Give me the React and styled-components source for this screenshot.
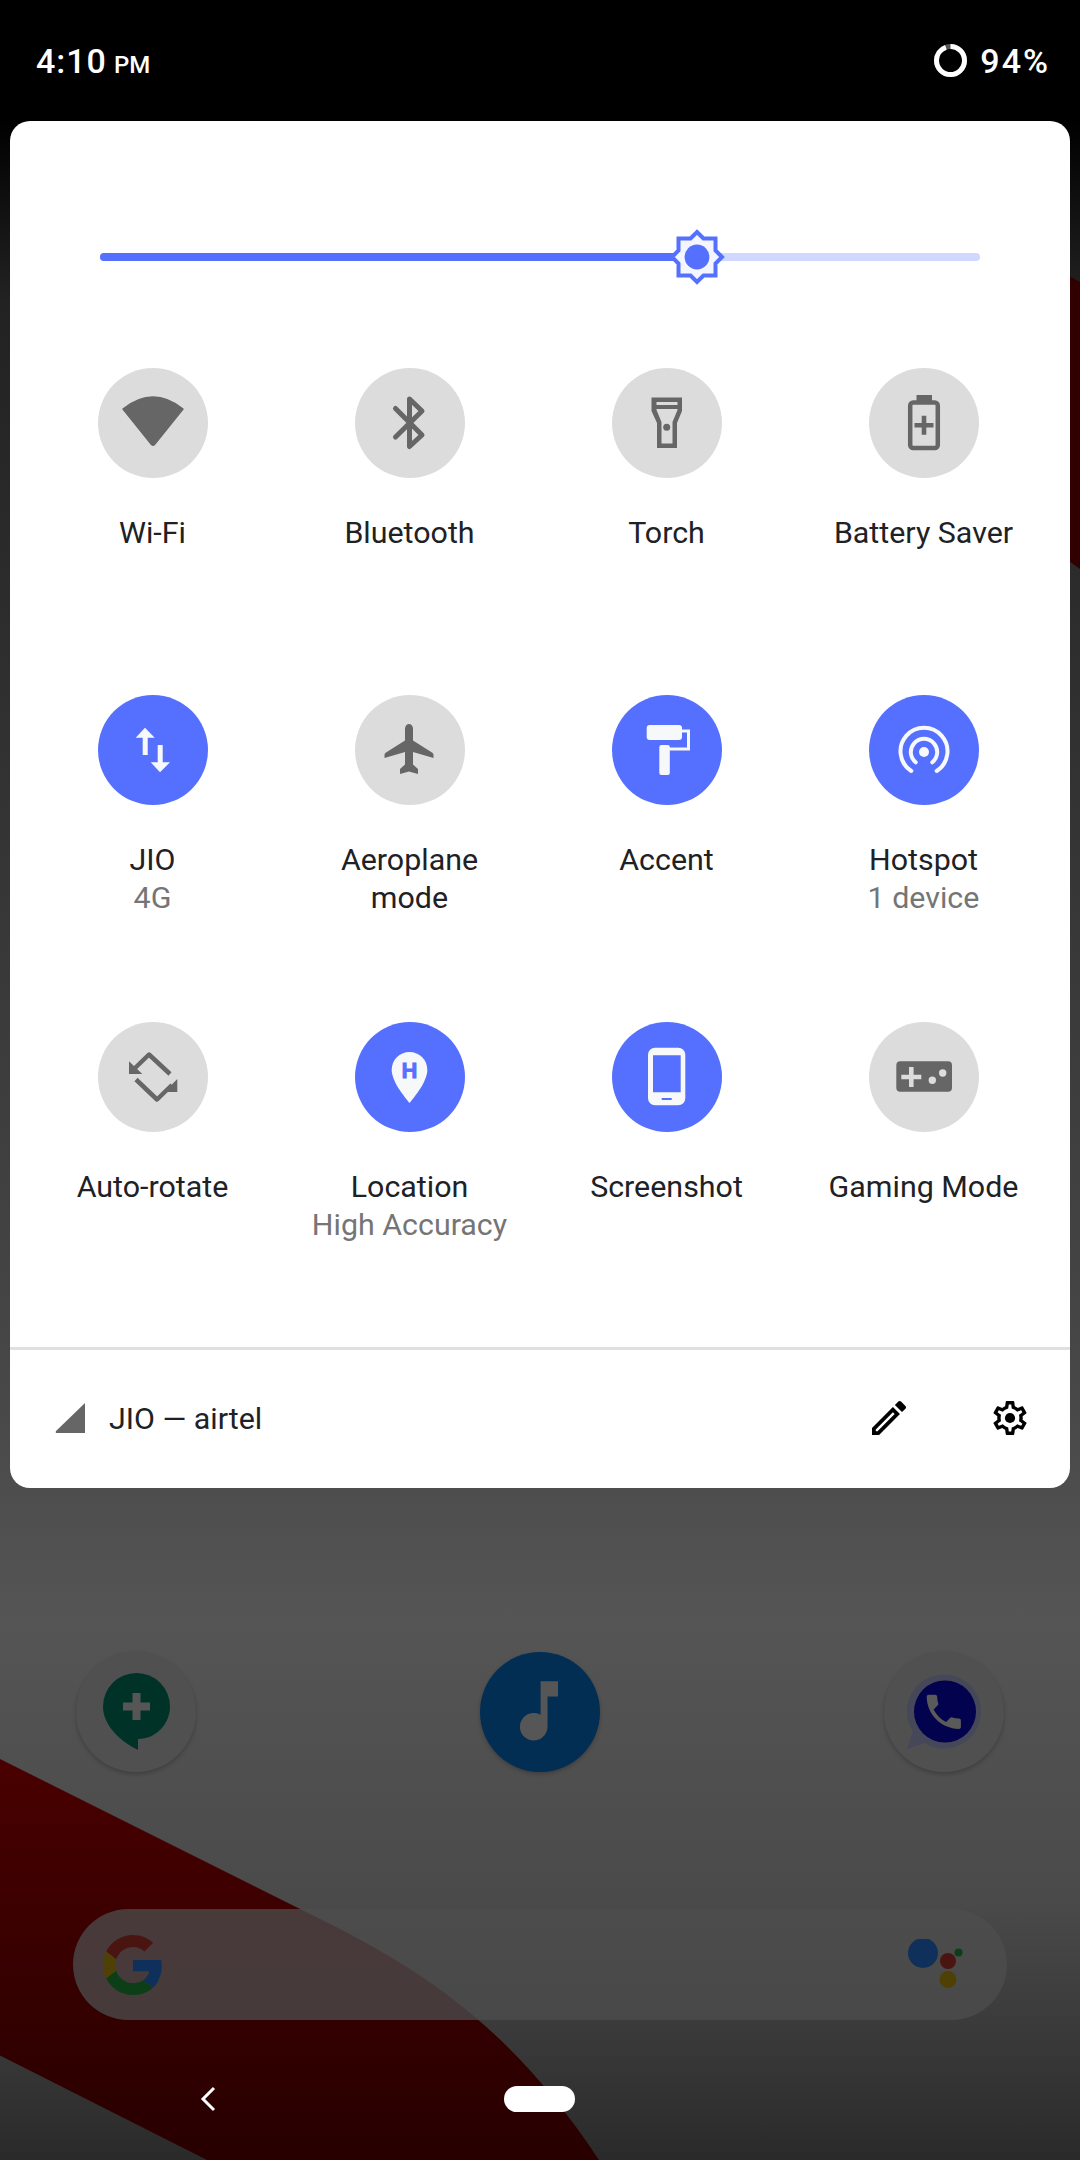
import React from 'react';
import styled, { createGlobalStyle } from 'styled-components';

const GlobalStyle = createGlobalStyle`
  html, body {
    margin: 0;
    padding: 0;
    background: #000;
  }
  body {
    font-family: Roboto, "Liberation Sans", sans-serif;
  }
`;

const Screen = styled.div`
  position: relative;
  width: 1080px;
  height: 2160px;
  overflow: hidden;
  background: linear-gradient(
    180deg,
    #000 0,
    #000 120px,
    #222 300px,
    #484848 1400px,
    #555 1620px,
    #4a4a4a 1900px,
    #2a2a2a 2160px
  );
`;

const Wallpaper = styled.svg`
  position: absolute;
  inset: 0;
`;

const Content = styled.div`
  position: relative;
  display: flex;
  flex-direction: column;
  height: 100%;
`;

/* status bar */
const StatusBar = styled.div`
  height: 121px;
  flex-shrink: 0;
  display: flex;
  align-items: center;
  justify-content: space-between;
  padding: 0 30px 0 36px;
  color: #fff;
  font-weight: 500;
`;

const Clock = styled.div`
  font-size: 34px;
  letter-spacing: 1px;
  display: flex;
  align-items: baseline;
  gap: 7px;
`;

const ClockSuffix = styled.span`
  font-size: 24px;
  letter-spacing: 0;
`;

const BatteryInfo = styled.div`
  display: flex;
  align-items: center;
  gap: 13px;
  font-size: 34px;
  letter-spacing: 2px;
`;

/* quick settings panel */
const Panel = styled.section`
  margin: 0 10px;
  height: 1367px;
  flex-shrink: 0;
  background: #fff;
  border-radius: 20px;
  display: flex;
  flex-direction: column;
`;

const SliderRow = styled.div`
  padding: 132px 90px 107px;
`;

const Track = styled.div`
  position: relative;
  height: 8px;
  border-radius: 4px;
  background: #d0d8ff;
`;

const TrackFill = styled.div`
  width: ${(p) => p.$value}%;
  height: 100%;
  border-radius: 4px;
  background: #5570ff;
`;

const Thumb = styled.svg`
  position: absolute;
  left: ${(p) => p.$value}%;
  top: 50%;
  width: 60px;
  height: 60px;
  transform: translate(-50%, -50%);
`;

const TileGrid = styled.div`
  flex: 1;
  display: grid;
  grid-template-columns: repeat(4, 257px);
  grid-template-rows: 327px 327px 1fr;
  padding-left: 14px;
`;

const Tile = styled.div`
  display: flex;
  flex-direction: column;
  align-items: center;
  text-align: center;
`;

const TileCircle = styled.div`
  width: 110px;
  height: 110px;
  border-radius: 50%;
  background: ${(p) => (p.$active ? '#5570ff' : '#dcdcdc')};
  color: ${(p) => (p.$active ? '#f7f8fa' : '#666666')};
  margin-bottom: 36px;
  display: flex;
`;

const TileLabel = styled.div`
  font-size: 30.4px;
  line-height: 37.5px;
  color: #202124;
  white-space: pre-line;
`;

const TileSub = styled.div`
  font-size: 30.4px;
  line-height: 37.5px;
  color: #757575;
`;

const PanelFooter = styled.div`
  box-sizing: border-box;
  height: 141px;
  flex-shrink: 0;
  border-top: 3px solid #e0e0e0;
  display: flex;
  align-items: center;
  padding: 0 43px 2px 45px;
`;

const Carrier = styled.div`
  flex: 1;
  margin-left: 24px;
  font-size: 30.4px;
  color: #202124;
`;

const FooterIcon = styled.svg`
  width: 34px;
  height: 34px;
  margin-left: ${(p) => p.$gap}px;
  color: #000;
`;

/* launcher behind the panel */
const Hotseat = styled.div`
  margin-top: 164px;
  padding: 0 76px;
  display: flex;
  justify-content: space-between;
`;

const AppCircle = styled.div`
  width: 120px;
  height: 120px;
  border-radius: 50%;
  background: ${(p) => p.$color || '#505050'};
  box-shadow: 0 2px 4px rgba(0, 0, 0, 0.22);
  display: flex;
`;

const SearchBar = styled.div`
  margin: 137px 73px 0;
  height: 111px;
  border-radius: 56px;
  background: rgba(77, 77, 77, 0.75);
  display: flex;
  align-items: center;
  justify-content: space-between;
  padding: 0 43px 0 30px;
`;

const NavBar = styled.div`
  margin-top: 66px;
  height: 26px;
  display: flex;
  align-items: center;
  padding-left: 200px;
  gap: 288px;
`;

const HomePill = styled.div`
  width: 71px;
  height: 26px;
  border-radius: 13px;
  background: #fff;
`;

const BackChevron = styled.svg`
  width: 16px;
  height: 26px;
`;

const Glyph = ({ children }) => (
  <svg viewBox="0 0 110 110" width="110" height="110" fill="currentColor">
    {children}
  </svg>
);

const icons = {
  wifi: (
    <path d="M25 41 Q55 17 85 41 L56.5 76.5 Q55 78 53.5 76.5 Z" stroke="currentColor" strokeWidth="1.5" strokeLinejoin="round" />
  ),
  bluetooth: (
    <path d="M40.5 40.5 L67 67 L54.5 78.5 V31 L67 43 L40.5 69" fill="none" stroke="currentColor" strokeWidth="5" strokeLinejoin="round" strokeLinecap="round" />
  ),
  torch: (
    <>
      <path
        fillRule="evenodd"
        d="M39.5 29.5H70V43L65 55V80H45V55L39.5 43Z M44.5 34V37H65.5V34Z M44.5 41V42L49.5 54V75.5H60.5V54L65.5 42V41Z"
      />
      <circle cx="54.7" cy="59.3" r="3.5" />
    </>
  ),
  battery: (
    <>
      <path d="M47.5 27H63V35H47.5Z" />
      <rect x="41.2" y="34.5" width="27.6" height="45.6" rx="3" fill="none" stroke="currentColor" strokeWidth="4.5" />
      <path d="M52.7 47.8H57.3V55H64.5V59.6H57.3V66.8H52.7V59.6H45.5V55H52.7Z" />
    </>
  ),
  data: (
    <path d="M47 32.7L56.7 42.7H49.7V60H44.7V42.7H37.7Z M59.7 50H64.7V67.3H72L62 77.3L52.7 67.3H59.7Z" />
  ),
  plane: (
    <path d="M50 33.5C50 31 52 29 54 29C56 29 58 31 58 33.5V45.5L77 57.5C78 58.2 78.5 59 78.5 60V63L58 57V69.5L63 74V79L54 76.5L45 79V74L50 69.5V57L29.5 63V60C29.5 59 30 58.2 31 57.5L50 45.5Z" />
  ),
  roller: (
    <>
      <rect x="34.7" y="30" width="35.3" height="15" rx="3" />
      <path d="M70 36H76.5V54H52" fill="none" stroke="currentColor" strokeWidth="3" />
      <rect x="47.3" y="50" width="10.5" height="30" rx="2" />
    </>
  ),
  hotspot: (
    <>
      <circle cx="55" cy="57" r="5" />
      <path
        d="M42.3 76A23.5 23.5 0 1 1 67.7 76 M46.7 67.3A13.2 13.2 0 1 1 63.3 67.3"
        fill="none"
        stroke="currentColor"
        strokeWidth="4"
        strokeLinecap="round"
      />
    </>
  ),
  rotate: (
    <>
      <path d="M72 52L51 32.5L36 47 M38 57.5L59 77.5L74 63" fill="none" stroke="currentColor" strokeWidth="4.5" strokeLinejoin="round" />
      <path d="M31 39.3V52H44.3Z M79.3 57V70H66.5Z" />
    </>
  ),
  location: (
    <>
      <path d="M54.5 30C44.5 30 36.7 38 36.7 47.7C36.7 59 48 73 54.5 81C61 73 72.3 59 72.3 47.7C72.3 38 64.5 30 54.5 30Z" />
      <text x="54.5" y="56" textAnchor="middle" fontFamily="Liberation Sans" fontWeight="700" fontSize="22" fill="#5570ff" stroke="#5570ff" strokeWidth="0.8">
        H
      </text>
    </>
  ),
  phone: (
    <path
      fillRule="evenodd"
      d="M43 25.7H66.3A7 7 0 0 1 73.3 32.7V76.3A7 7 0 0 1 66.3 83.3H43A7 7 0 0 1 36 76.3V32.7A7 7 0 0 1 43 25.7Z M41 33.3V70.3H68.7V33.3Z M49.7 76V78H59.7V76Z"
    />
  ),
  gamepad: (
    <path
      fillRule="evenodd"
      d="M31.3 39.3H79A4 4 0 0 1 83 43.3V65.7A4 4 0 0 1 79 69.7H31.3A4 4 0 0 1 27.3 65.7V43.3A4 4 0 0 1 31.3 39.3Z M40 45V52.7H32.3V57.3H40V65H44.6V57.3H52.3V52.7H44.6V45Z M63.3 54.6A3.7 3.7 0 1 0 63.3 62A3.7 3.7 0 1 0 63.3 54.6Z M73.7 47.3A3.7 3.7 0 1 0 73.7 54.7A3.7 3.7 0 1 0 73.7 47.3Z"
    />
  ),
};

const tiles = [
  { icon: 'wifi', label: 'Wi-Fi' },
  { icon: 'bluetooth', label: 'Bluetooth' },
  { icon: 'torch', label: 'Torch' },
  { icon: 'battery', label: 'Battery Saver' },
  { icon: 'data', label: 'JIO', sub: '4G', active: true },
  { icon: 'plane', label: 'Aeroplane\nmode' },
  { icon: 'roller', label: 'Accent', active: true },
  { icon: 'hotspot', label: 'Hotspot', sub: '1 device', active: true },
  { icon: 'rotate', label: 'Auto-rotate' },
  { icon: 'location', label: 'Location', sub: 'High Accuracy', active: true },
  { icon: 'phone', label: 'Screenshot', active: true },
  { icon: 'gamepad', label: 'Gaming Mode' },
];

const BRIGHTNESS = 67.8;

export default function App() {
  return (
    <Screen>
      <GlobalStyle />
      <Wallpaper viewBox="0 0 1080 2160" width="1080" height="2160">
        <defs>
          <linearGradient id="wave" x1="0" y1="1750" x2="0" y2="2160" gradientUnits="userSpaceOnUse">
            <stop offset="0" stopColor="#4a0000" />
            <stop offset="1" stopColor="#280000" />
          </linearGradient>
        </defs>
        <path d="M0 1759L296 1907C400 1958 500 2010 599 2160H207L0 2055.6Z" fill="url(#wave)" />
        <path d="M1040 260L1080 282V569L1040 540Z" fill="#300000" />
      </Wallpaper>
      <Content>
        <StatusBar>
          <Clock>
            4:10<ClockSuffix>PM</ClockSuffix>
          </Clock>
          <BatteryInfo>
            <svg width="33" height="33" viewBox="0 0 33 33">
              <circle cx="16.5" cy="16.5" r="14" fill="none" stroke="#555" strokeWidth="5" />
              <circle
                cx="16.5"
                cy="16.5"
                r="14"
                fill="none"
                stroke="#fff"
                strokeWidth="5"
                strokeDasharray="82.7 88"
                transform="rotate(-90 16.5 16.5)"
              />
            </svg>
            94%
          </BatteryInfo>
        </StatusBar>

        <Panel>
          <SliderRow>
            <Track>
              <TrackFill $value={BRIGHTNESS} />
              <Thumb $value={BRIGHTNESS} viewBox="0 0 60 60">
                <polygon
                  points="30,5 36.5,11.5 48.5,11.5 48.5,23.5 55,30 48.5,36.5 48.5,48.5 36.5,48.5 30,55 23.5,48.5 11.5,48.5 11.5,36.5 5,30 11.5,23.5 11.5,11.5 23.5,11.5"
                  fill="#f4f6ff"
                  stroke="#5570ff"
                  strokeWidth="4"
                />
                <circle cx="30" cy="30" r="12.4" fill="#5570ff" />
              </Thumb>
            </Track>
          </SliderRow>

          <TileGrid>
            {tiles.map((t) => (
              <Tile key={t.icon}>
                <TileCircle $active={t.active}>
                  <Glyph>{icons[t.icon]}</Glyph>
                </TileCircle>
                <TileLabel>{t.label}</TileLabel>
                {t.sub && <TileSub>{t.sub}</TileSub>}
              </Tile>
            ))}
          </TileGrid>

          <PanelFooter>
            <svg width="30" height="30" viewBox="0 0 30 30">
              <path d="M30 0V30H2Q0 30 1 28Z" fill="#666" />
            </svg>
            <Carrier>JIO — airtel</Carrier>
            <FooterIcon viewBox="3 3 18 18" fill="currentColor">
              <path d="M3 17.25V21h3.75L17.81 9.94l-3.75-3.75L3 17.25zM5.92 19H5v-.92l9.06-9.06.92.92L5.92 19zM20.71 5.63l-2.34-2.34c-.2-.2-.45-.29-.71-.29s-.51.1-.7.29l-1.83 1.83 3.75 3.75 1.83-1.83c.39-.39.39-1.02 0-1.41z" />
            </FooterIcon>
            <FooterIcon $gap={87} viewBox="2 2 20 20" fill="currentColor">
              <path d="M19.43 12.98c.04-.32.07-.64.07-.98 0-.34-.03-.66-.07-.98l2.11-1.65c.19-.15.24-.42.12-.64l-2-3.46c-.09-.16-.26-.25-.44-.25-.06 0-.12.01-.17.03l-2.49 1c-.52-.4-1.08-.73-1.69-.98l-.38-2.65C14.46 2.18 14.25 2 14 2h-4c-.25 0-.46.18-.49.42l-.38 2.65c-.61.25-1.17.59-1.69.98l-2.49-1c-.06-.02-.12-.03-.18-.03-.17 0-.34.09-.43.25l-2 3.46c-.13.22-.07.49.12.64l2.11 1.65c-.04.32-.07.65-.07.98 0 .33.03.66.07.98l-2.11 1.65c-.19.15-.24.42-.12.64l2 3.46c.09.16.26.25.44.25.06 0 .12-.01.17-.03l2.49-1c.52.4 1.08.73 1.69.98l.38 2.65c.03.24.24.42.49.42h4c.25 0 .46-.18.49-.42l.38-2.65c.61-.25 1.17-.59 1.69-.98l2.49 1c.06.02.12.03.18.03.17 0 .34-.09.43-.25l2-3.46c.12-.22.07-.49-.12-.64l-2.11-1.65zm-1.98-1.71c.04.31.05.52.05.73 0 .21-.02.43-.05.73l-.14 1.13.89.7 1.08.84-.7 1.21-1.27-.51-1.04-.42-.9.68c-.43.32-.84.56-1.25.73l-1.06.43-.16 1.13-.2 1.35h-1.4l-.19-1.35-.16-1.13-1.06-.43c-.43-.18-.83-.41-1.23-.71l-.91-.7-1.06.43-1.27.51-.7-1.21 1.08-.84.89-.7-.14-1.13c-.03-.31-.05-.54-.05-.74s.02-.43.05-.73l.14-1.13-.89-.7-1.08-.84.7-1.21 1.27.51 1.04.42.9-.68c.43-.32.84-.56 1.25-.73l1.06-.43.16-1.13.2-1.35h1.39l.19 1.35.16 1.13 1.06.43c.43.18.83.41 1.23.71l.91.7 1.06-.43 1.27-.51.7 1.21-1.07.85-.89.7.14 1.13z" />
              <circle cx="12" cy="12" r="3" />
            </FooterIcon>
          </PanelFooter>
        </Panel>

        <Hotseat>
          <AppCircle>
            <svg width="120" height="120" viewBox="0 0 120 120">
              <path d="M60.5 21A33.5 33.5 0 0 1 94 54.5C94 72 80 87 62 87V98C42 88 27 72 27 54.5A33.5 33.5 0 0 1 60.5 21Z" fill="#003228" />
              <path d="M56.5 41H64.5V50.5H74V58.5H64.5V68H56.5V58.5H47V50.5H56.5Z" fill="#565656" />
            </svg>
          </AppCircle>
          <AppCircle $color="#032e54">
            <svg width="120" height="120" viewBox="0 0 120 120">
              <path d="M60.6 29.3H78V44.5H67.5V74.7A13.8 13.8 0 1 1 60.6 62.8Z" fill="#565656" />
            </svg>
          </AppCircle>
          <AppCircle>
            <svg width="120" height="120" viewBox="0 0 120 120">
              <path d="M60 22.5C80.5 22.5 97 39 97 59.5C97 80 80.5 96.5 60 96.5C53 96.5 46 94.5 41 91L23 97L29 79C25 73 23 66.5 23 59.5C23 39 39.5 22.5 60 22.5Z" fill="#47475a" />
              <circle cx="61" cy="59.5" r="31" fill="#02024e" />
              <g transform="translate(37 37) scale(1.9)" fill="#5a5a5a">
                <path d="M6.62 10.79c1.44 2.83 3.76 5.14 6.59 6.59l2.2-2.2c.27-.27.67-.36 1.02-.24 1.12.37 2.33.57 3.57.57.55 0 1 .45 1 1V20c0 .55-.45 1-1 1-9.39 0-17-7.61-17-17 0-.55.45-1 1-1h3.5c.55 0 1 .45 1 1 0 1.25.2 2.45.57 3.57.11.35.03.74-.25 1.02l-2.2 2.2z" />
              </g>
            </svg>
          </AppCircle>
        </Hotseat>

        <SearchBar>
          <svg width="60" height="60" viewBox="0 0 48 48">
            <path fill="#4a1510" d="M24 9.5c3.54 0 6.71 1.22 9.21 3.6l6.85-6.85C35.9 2.38 30.47 0 24 0 14.62 0 6.51 5.38 2.56 13.22l7.98 6.19C12.43 13.72 17.74 9.5 24 9.5z" />
            <path fill="#10305c" d="M46.98 24.55c0-1.57-.15-3.09-.38-4.55H24v9.02h12.94c-.58 2.96-2.26 5.48-4.78 7.18l7.73 6c4.51-4.18 7.09-10.36 7.09-17.65z" />
            <path fill="#4f4006" d="M10.53 28.59c-.48-1.45-.76-2.99-.76-4.59s.27-3.14.76-4.59l-7.98-6.19C.92 16.46 0 20.12 0 24c0 3.88.92 7.54 2.56 10.78l7.97-6.19z" />
            <path fill="#0c3f18" d="M24 48c6.48 0 11.93-2.13 15.89-5.81l-7.73-6c-2.15 1.45-4.92 2.3-8.16 2.3-6.26 0-11.57-4.22-13.47-9.91l-7.98 6.19C6.51 42.62 14.62 48 24 48z" />
          </svg>
          <svg width="56" height="52" viewBox="0 0 56 52">
            <circle cx="15" cy="14" r="15" fill="#10305c" />
            <circle cx="40" cy="22" r="8" fill="#4a1510" />
            <circle cx="40" cy="40.5" r="8.5" fill="#4f4006" />
            <circle cx="50.5" cy="13.5" r="4" fill="#0c3f18" />
          </svg>
        </SearchBar>

        <NavBar>
          <BackChevron viewBox="0 0 16 26">
            <path d="M14 2L3 13L14 24" fill="none" stroke="#fff" strokeWidth="3" />
          </BackChevron>
          <HomePill />
        </NavBar>
      </Content>
    </Screen>
  );
}
